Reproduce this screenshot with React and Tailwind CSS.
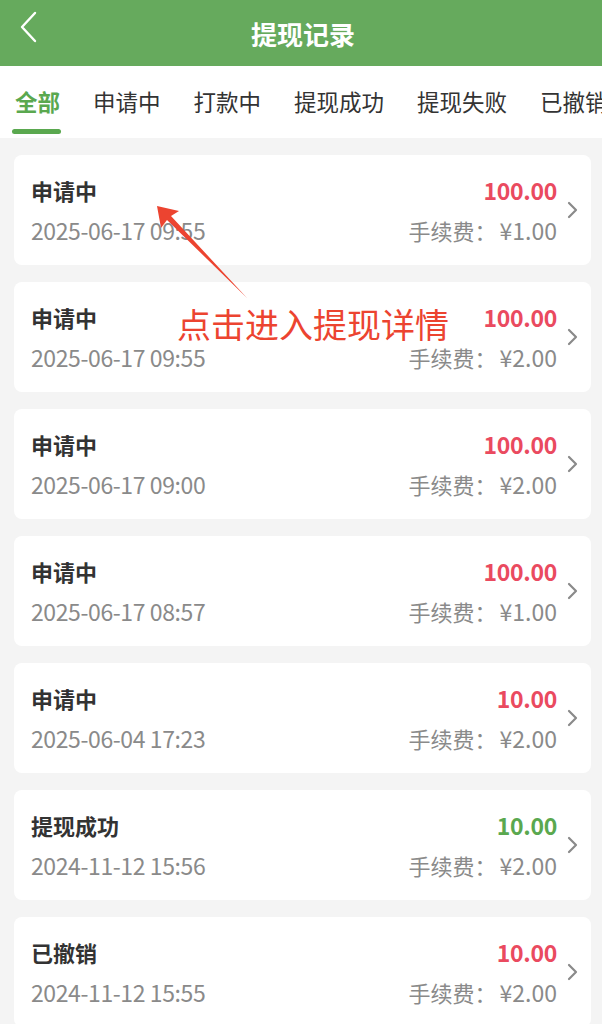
import React from 'react';

const tabs = ['全部', '申请中', '打款中', '提现成功', '提现失败', '已撤销'];

const records = [
    { status: '申请中', time: '2025-06-17 09:55', amount: '100.00', fee: '1.00', ok: false },
    { status: '申请中', time: '2025-06-17 09:55', amount: '100.00', fee: '2.00', ok: false },
    { status: '申请中', time: '2025-06-17 09:00', amount: '100.00', fee: '2.00', ok: false },
    { status: '申请中', time: '2025-06-17 08:57', amount: '100.00', fee: '1.00', ok: false },
    { status: '申请中', time: '2025-06-04 17:23', amount: '10.00', fee: '2.00', ok: false },
    { status: '提现成功', time: '2024-11-12 15:56', amount: '10.00', fee: '2.00', ok: true },
    { status: '已撤销', time: '2024-11-12 15:55', amount: '10.00', fee: '2.00', ok: false },
];

const RecordCard = ({ r }) => (
    <div className="bg-white rounded-lg h-[110px] pl-[17px] pr-[11px] flex items-center">
        <div className="flex-1 flex flex-col gap-[8px]">
            <div className="flex justify-between items-center h-[32px]">
                <span className="text-[22px] font-bold text-[#333]">{r.status}</span>
                <span className={`text-[23px] font-bold tracking-[-0.3px] ${r.ok ? 'text-[#5aa84f]' : 'text-[#ea4a5f]'}`}>{r.amount}</span>
            </div>
            <div className="flex justify-between items-center h-[32px]">
                <span className="text-[23px] tracking-[-0.4px] text-[#8a8a8a]">{r.time}</span>
                <span className="text-[22px] text-[#8a8a8a]">手续费：<span className="text-[23px] ml-[3px]">¥{r.fee}</span></span>
            </div>
        </div>
        <svg width="17" height="20" viewBox="0 0 17 20" className="ml-[6px]">
            <path d="M6 3 L13 10 L6 17" fill="none" stroke="#8a8a8a" strokeWidth="2.2" strokeLinecap="round" strokeLinejoin="round" />
        </svg>
    </div>
);

export default function App() {
    return (
        <div className="w-[602px] h-[1024px] overflow-hidden bg-[#f4f4f4] relative" style={{ fontFamily: '"Noto Sans CJK SC", "Noto Sans", sans-serif' }}>
            <header className="h-[66px] bg-[#66aa5d] flex items-center justify-center relative">
                <svg width="24" height="34" viewBox="0 0 24 34" className="absolute left-[16px] top-[10px]">
                    <path d="M19 3 L6 17 L19 31" fill="none" stroke="#fff" strokeWidth="2.4" strokeLinecap="round" strokeLinejoin="round" />
                </svg>
                <h1 className="text-white text-[26px] font-bold pl-[4px]">提现记录</h1>
            </header>

            <nav className="h-[72px] bg-white flex items-stretch gap-[33px] pl-[15px] whitespace-nowrap overflow-hidden">
                {tabs.map((t, i) => (
                    <div key={t} className="relative flex items-center shrink-0">
                        <span className={`text-[22.5px] ${i === 0 ? 'text-[#5aa84f] font-bold' : 'text-[#333]'}`}>{t}</span>
                        {i === 0 && <div className="absolute left-[-3px] right-[-1px] bottom-[4px] h-[5px] rounded-full bg-[#5aa84f]" />}
                    </div>
                ))}
            </nav>

            <div className="pl-[14px] pr-[11px] pt-[17px] flex flex-col gap-[17px]">
                {records.map((r, i) => (
                    <RecordCard key={i} r={r} />
                ))}
            </div>

            {/* annotation overlay */}
            <svg className="absolute left-0 top-0 pointer-events-none" width="602" height="400" viewBox="0 0 602 400">
                <path d="M157 206 L179 211 L171 216 L247 298 L167 220 L161 228 Z" fill="#ec4430" />
            </svg>
            <div className="absolute left-[177px] top-[300px] text-[34px] leading-[48px] text-[#ec4430] pointer-events-none whitespace-nowrap">点击进入提现详情</div>
        </div>
    );
}
